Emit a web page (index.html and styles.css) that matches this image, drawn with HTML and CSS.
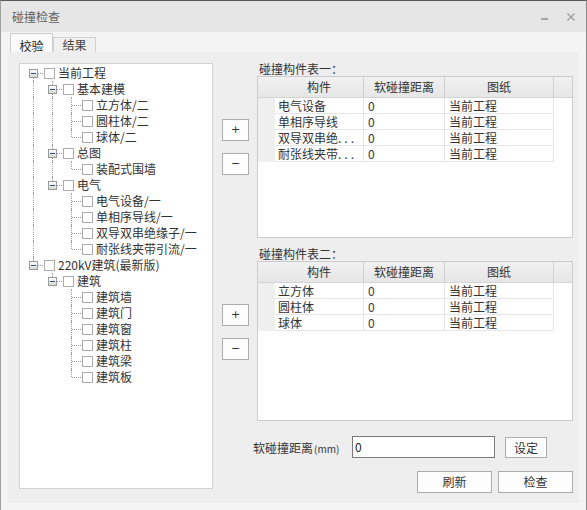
FILE: index.html
```html
<!DOCTYPE html>
<html>
<head>
<meta charset="utf-8">
<link rel="stylesheet" href="styles.css">
</head>
<body>
<div class="window">
  <div class="titlebar">
    <span class="title">碰撞检查</span>
    <span class="controls">
      <span class="min"></span>
      <svg class="close" width="8" height="8" viewBox="0 0 8 8"><path d="M0.5 0.5 L7.5 7.5 M7.5 0.5 L0.5 7.5" stroke="#9c9c9c" stroke-width="1.2" fill="none"/></svg>
    </span>
  </div>
  <div class="tabs">
    <div class="tab active">校验</div>
    <div class="tab">结果</div>
  </div>
  <div class="page">
    <div class="tree">
      <div class="row"><span class="ind exp first"><span class="box"></span></span><span class="cb"></span><span class="lbl">当前工程</span></div>
      <div class="row"><span class="ind line"></span><span class="ind exp mid"><span class="box"></span></span><span class="cb"></span><span class="lbl">基本建模</span></div>
      <div class="row"><span class="ind line"></span><span class="ind line"></span><span class="ind elbow"></span><span class="cb"></span><span class="lbl">立方体/二</span></div>
      <div class="row"><span class="ind line"></span><span class="ind line"></span><span class="ind elbow"></span><span class="cb"></span><span class="lbl">圆柱体/二</span></div>
      <div class="row"><span class="ind line"></span><span class="ind line"></span><span class="ind elbow last"></span><span class="cb"></span><span class="lbl">球体/二</span></div>
      <div class="row"><span class="ind line"></span><span class="ind exp mid"><span class="box"></span></span><span class="cb"></span><span class="lbl">总图</span></div>
      <div class="row"><span class="ind line"></span><span class="ind line"></span><span class="ind elbow last"></span><span class="cb"></span><span class="lbl">装配式围墙</span></div>
      <div class="row"><span class="ind line"></span><span class="ind exp last"><span class="box"></span></span><span class="cb"></span><span class="lbl">电气</span></div>
      <div class="row"><span class="ind line"></span><span class="ind"></span><span class="ind elbow"></span><span class="cb"></span><span class="lbl">电气设备/一</span></div>
      <div class="row"><span class="ind line"></span><span class="ind"></span><span class="ind elbow"></span><span class="cb"></span><span class="lbl">单相序导线/一</span></div>
      <div class="row"><span class="ind line"></span><span class="ind"></span><span class="ind elbow"></span><span class="cb"></span><span class="lbl">双导双串绝缘子/一</span></div>
      <div class="row"><span class="ind line"></span><span class="ind"></span><span class="ind elbow last"></span><span class="cb"></span><span class="lbl">耐张线夹带引流/一</span></div>
      <div class="row"><span class="ind exp last"><span class="box"></span></span><span class="cb"></span><span class="lbl">220kV建筑(最新版)</span></div>
      <div class="row"><span class="ind"></span><span class="ind exp last"><span class="box"></span></span><span class="cb"></span><span class="lbl">建筑</span></div>
      <div class="row"><span class="ind"></span><span class="ind"></span><span class="ind elbow"></span><span class="cb"></span><span class="lbl">建筑墙</span></div>
      <div class="row"><span class="ind"></span><span class="ind"></span><span class="ind elbow"></span><span class="cb"></span><span class="lbl">建筑门</span></div>
      <div class="row"><span class="ind"></span><span class="ind"></span><span class="ind elbow"></span><span class="cb"></span><span class="lbl">建筑窗</span></div>
      <div class="row"><span class="ind"></span><span class="ind"></span><span class="ind elbow"></span><span class="cb"></span><span class="lbl">建筑柱</span></div>
      <div class="row"><span class="ind"></span><span class="ind"></span><span class="ind elbow"></span><span class="cb"></span><span class="lbl">建筑梁</span></div>
      <div class="row"><span class="ind"></span><span class="ind"></span><span class="ind elbow last"></span><span class="cb"></span><span class="lbl">建筑板</span></div>
    </div>
    <div class="right">
      <div class="section">
        <div class="btncol"><button class="sbtn">+</button><button class="sbtn">−</button></div>
        <div class="group">
          <div class="glabel">碰撞构件表一：</div>
          <div class="grid g1">
            <div class="hrow"><span class="hc corner"></span><span class="hc c1">构件</span><span class="hc c2">软碰撞距离</span><span class="hc c3">图纸</span><span class="hc fill"></span></div>
            <div class="drow"><span class="rh"></span><span class="dc c1">电气设备</span><span class="dc c2">0</span><span class="dc c3">当前工程</span></div>
            <div class="drow"><span class="rh"></span><span class="dc c1">单相序导线</span><span class="dc c2">0</span><span class="dc c3">当前工程</span></div>
            <div class="drow"><span class="rh"></span><span class="dc c1">双导双串绝<span class="dots">...</span></span><span class="dc c2">0</span><span class="dc c3">当前工程</span></div>
            <div class="drow"><span class="rh"></span><span class="dc c1">耐张线夹带<span class="dots">...</span></span><span class="dc c2">0</span><span class="dc c3">当前工程</span></div>
          </div>
        </div>
      </div>
      <div class="section s2">
        <div class="btncol"><button class="sbtn">+</button><button class="sbtn">−</button></div>
        <div class="group">
          <div class="glabel">碰撞构件表二：</div>
          <div class="grid g2">
            <div class="hrow"><span class="hc corner"></span><span class="hc c1">构件</span><span class="hc c2">软碰撞距离</span><span class="hc c3">图纸</span><span class="hc fill"></span></div>
            <div class="drow"><span class="rh"></span><span class="dc c1">立方体</span><span class="dc c2">0</span><span class="dc c3">当前工程</span></div>
            <div class="drow"><span class="rh"></span><span class="dc c1">圆柱体</span><span class="dc c2">0</span><span class="dc c3">当前工程</span></div>
            <div class="drow"><span class="rh"></span><span class="dc c1">球体</span><span class="dc c2">0</span><span class="dc c3">当前工程</span></div>
          </div>
        </div>
      </div>
      <div class="bottom">
        <div class="frow">
          <span class="flabel">软碰撞距离<span class="mm">(mm)</span></span>
          <div class="input">0</div>
          <button class="btn set">设定</button>
        </div>
        <div class="brow">
          <button class="btn wide">刷新</button>
          <button class="btn wide">检查</button>
        </div>
      </div>
    </div>
  </div>
</div>
</body>
</html>
```

FILE: styles.css
```css
html, body {
  margin: 0;
  padding: 0;
}
body {
  font-family: "Noto Sans CJK SC", "Microsoft YaHei", "Noto Sans", sans-serif;
  font-size: 12px;
  color: #333;
  background: #ffffff;
}
.window {
  width: 587px;
  height: 510px;
  box-sizing: border-box;
  border-top: 1px solid #5a5a5a;
  border-left: 1px solid #a0a0a0;
  border-right: 1px solid #8c8c8c;
  background: #f4f4f4;
  display: flex;
  flex-direction: column;
  overflow: hidden;
}
.titlebar {
  height: 31px;
  flex: none;
  background: #e6e6e6;
  display: flex;
  align-items: center;
  padding: 0 11px 0 11px;
}
.title {
  color: #5f5f5f;
  font-size: 12px;
  line-height: 16px;
}
.controls {
  margin-left: auto;
  display: flex;
  align-items: center;
}
.min {
  width: 7px;
  height: 2px;
  background: #a6a6a6;
  margin-top: 5px;
  margin-right: 19px;
}
.close {
  display: block;
}
.tabs {
  display: flex;
  align-items: flex-end;
  padding-left: 9px;
  margin-top: 1px;
  height: 19px;
  flex: none;
}
.tab {
  width: 41px;
  height: 14px;
  line-height: 14px;
  text-align: center;
  border: 1px solid #d2d2d2;
  border-bottom: none;
  background: #f0f0f0;
  color: #444;
  font-size: 12px;
}
.tab.active {
  height: 18px;
  padding-top: 0;
  line-height: 24px;
  background: #fafafa;
  border-color: #cdcdcd;
  color: #222;
}
.page {
  margin-left: 7px;
  width: 571px;
  height: 451px;
  background: #eeeeee;
  display: flex;
  box-sizing: border-box;
  padding: 10px 0 0 11px;
}
.tree {
  margin-top: 1px;
  width: 194px;
  height: 426px;
  box-sizing: border-box;
  background: #ffffff;
  border: 1px solid #d3d3d3;
  padding: 1px 0 0 4px;
}
.row {
  display: flex;
  align-items: center;
  height: 16px;
}
.ind {
  position: relative;
  flex: none;
  width: 19px;
  height: 16px;
}
.ind.line::before,
.elbow::before,
.exp::before {
  content: "";
  position: absolute;
  left: 9px;
  top: 0;
  bottom: 0;
  border-left: 1px dotted #9a9a9a;
}
.elbow.last::before,
.exp.last::before {
  bottom: 8px;
}
.exp.first::before {
  top: 8px;
}
.elbow::after {
  content: "";
  position: absolute;
  left: 10px;
  top: 8px;
  width: 9px;
  border-top: 1px dotted #9a9a9a;
}
.exp::after {
  content: "";
  position: absolute;
  left: 14px;
  top: 8px;
  width: 5px;
  border-top: 1px dotted #9a9a9a;
}
.box {
  position: absolute;
  left: 5px;
  top: 4px;
  width: 9px;
  height: 9px;
  box-sizing: border-box;
  border: 1px solid #9a9a9a;
  background: linear-gradient(#ffffff, #d6d6d6);
  z-index: 1;
}
.box::after {
  content: "";
  position: absolute;
  left: 1px;
  top: 3px;
  width: 5px;
  height: 1px;
  background: #3d4c84;
}
.cb {
  flex: none;
  width: 11px;
  height: 11px;
  box-sizing: border-box;
  margin-left: 1px;
  border: 1px solid #ababab;
  background: #ffffff;
}
.lbl {
  margin-left: 3px;
  line-height: 16px;
  white-space: nowrap;
  color: #333;
}
.right {
  margin-left: 9px;
  width: 351px;
  display: flex;
  flex-direction: column;
}
.section {
  display: flex;
}
.section.s2 {
  margin-top: 9px;
}
.btncol {
  width: 27px;
  display: flex;
  flex-direction: column;
  gap: 12px;
  padding-top: 57px;
  margin-right: 8px;
}
.sbtn {
  width: 27px;
  height: 22px;
  padding: 0;
  margin: 0;
  border: 1px solid #adadad;
  background: #fdfdfd;
  font-family: "DejaVu Sans", sans-serif;
  font-size: 11px;
  line-height: 18px;
  color: #333;
}
.group {
  width: 316px;
}
.glabel {
  line-height: 14px;
  height: 14px;
  padding-left: 2px;
  color: #333;
}
.grid {
  box-sizing: border-box;
  border: 1px solid #cbcbcb;
  background: #ffffff;
}
.g1 {
  height: 162px;
}
.g2 {
  height: 160px;
}
.hrow {
  display: flex;
  height: 20px;
  background: linear-gradient(#f1f1f1, #e6e6e6);
  border-bottom: 1px solid #d4d4d4;
}
.hc {
  flex: none;
  box-sizing: border-box;
  line-height: 20px;
  text-align: center;
  border-right: 1px solid #d0d0d0;
  color: #333;
}
.hc.corner {
  width: 17px;
  border-right: none;
}
.hc.c1 {
  width: 89px;
}
.hc.c2 {
  width: 81px;
}
.hc.c3 {
  width: 109px;
}
.hc.fill {
  width: 18px;
  border-right: none;
}
.drow {
  display: flex;
  height: 16px;
}
.rh {
  flex: none;
  width: 17px;
  background: #efefef;
}
.dc {
  flex: none;
  box-sizing: border-box;
  line-height: 15px;
  padding-left: 3px;
  border-right: 1px solid #e6e6e6;
  border-bottom: 1px solid #e6e6e6;
  white-space: nowrap;
  overflow: hidden;
  color: #333;
}
.dc.c1 {
  width: 89px;
}
.dc.c2 {
  width: 81px;
  padding-left: 4px;
}
.dc.c3 {
  width: 109px;
  padding-left: 4px;
}
.dots {
  letter-spacing: 3px;
}
.bottom {
  margin-top: 15px;
}
.frow {
  display: flex;
  align-items: center;
  height: 22px;
}
.flabel {
  margin-left: 31px;
  width: 99px;
  color: #333;
  white-space: nowrap;
}
.mm {
  font-size: 10px;
  margin-left: 1px;
}
.input {
  width: 143px;
  height: 22px;
  box-sizing: border-box;
  border: 1px solid #7a7a7a;
  background: #ffffff;
  padding-left: 2px;
  line-height: 20px;
  color: #222;
}
.btn {
  height: 22px;
  padding: 0;
  margin: 0;
  border: 1px solid #adadad;
  background: #fdfdfd;
  font-family: "Noto Sans CJK SC", "Microsoft YaHei", sans-serif;
  font-size: 12px;
  color: #333;
  line-height: 20px;
}
.btn.set {
  width: 42px;
  height: 21px;
  margin-left: 10px;
}
.brow {
  margin-top: 13px;
  display: flex;
  justify-content: flex-end;
  gap: 6px;
}
.btn.wide {
  width: 75px;
}
```
